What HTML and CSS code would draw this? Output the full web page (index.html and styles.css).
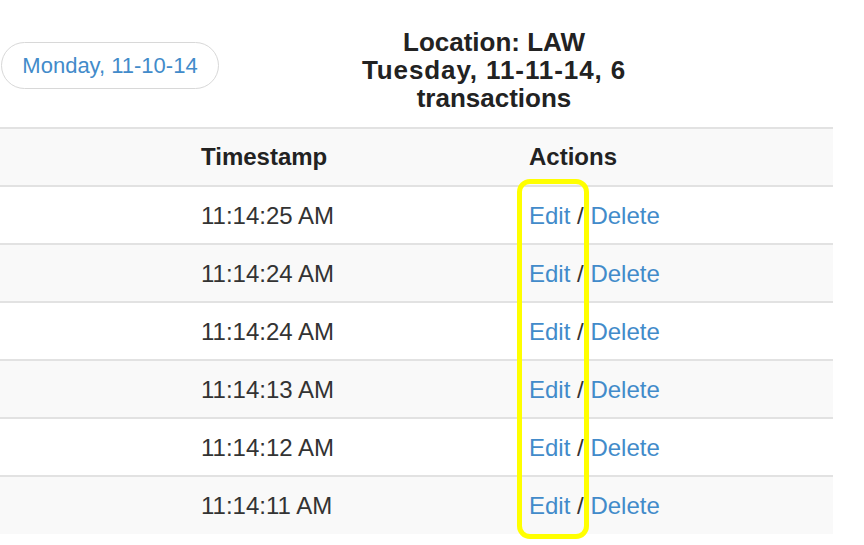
FILE: index.html
```html
<!DOCTYPE html>
<html>
<head>
<meta charset="utf-8">
<link rel="stylesheet" href="styles.css">
</head>
<body>
<div class="page">
  <div class="header">
    <a class="day-btn" href="#">Monday, 11-10-14</a>
    <h4 class="title">Location: LAW<br><span class="date">Tuesday, 11-11-14, 6</span> transactions</h4>
  </div>
  <div class="table">
    <div class="row head">
      <div class="cell"></div>
      <div class="cell">Timestamp</div>
      <div class="cell">Actions</div>
    </div>
    <div class="row">
      <div class="cell"></div>
      <div class="cell">11:14:25 AM</div>
      <div class="cell"><a href="#">Edit</a> / <a href="#">Delete</a></div>
    </div>
    <div class="row alt">
      <div class="cell"></div>
      <div class="cell">11:14:24 AM</div>
      <div class="cell"><a href="#">Edit</a> / <a href="#">Delete</a></div>
    </div>
    <div class="row">
      <div class="cell"></div>
      <div class="cell">11:14:24 AM</div>
      <div class="cell"><a href="#">Edit</a> / <a href="#">Delete</a></div>
    </div>
    <div class="row alt">
      <div class="cell"></div>
      <div class="cell">11:14:13 AM</div>
      <div class="cell"><a href="#">Edit</a> / <a href="#">Delete</a></div>
    </div>
    <div class="row">
      <div class="cell"></div>
      <div class="cell">11:14:12 AM</div>
      <div class="cell"><a href="#">Edit</a> / <a href="#">Delete</a></div>
    </div>
    <div class="row alt last">
      <div class="cell"></div>
      <div class="cell">11:14:11 AM</div>
      <div class="cell"><a href="#">Edit</a> / <a href="#">Delete</a></div>
    </div>
  </div>
  <div class="highlight"></div>
</div>
</body>
</html>
```
FILE: styles.css
```css
html, body {
  margin: 0;
  padding: 0;
  background: #fff;
}
body {
  font-family: "Liberation Sans", Arial, Helvetica, sans-serif;
  color: #333;
  overflow: hidden;
}
.page {
  position: relative;
  width: 864px;
  height: 545px;
}
.header {
  display: flex;
  align-items: flex-start;
  height: 127px;
}
.day-btn {
  display: block;
  box-sizing: border-box;
  margin: 42px 0 0 1px;
  height: 47px;
  width: 218px;
  border: 1px solid #d8d8d8;
  border-radius: 24px;
  color: #428bca;
  text-decoration: none;
  font-size: 22px;
  line-height: 45px;
  text-align: center;
}
.title {
  margin: 28px 0 0 135px;
  width: 280px;
  font-size: 26px;
  line-height: 28px;
  font-weight: bold;
  text-align: center;
  color: #222;
}
.title .date {
  letter-spacing: 0.9px;
}
.table {
  width: 833px;
  border-top: 2px solid #e2e2e2;
}
.row {
  display: grid;
  grid-template-columns: 193px 328px 1fr;
  height: 56px;
  border-bottom: 2px solid #e2e2e2;
  background: #fff;
}
.row.head, .row.alt {
  background: #f9f9f9;
}
.row.last {
  border-bottom: none;
  height: 57px;
}
.cell {
  padding: 0 8px;
  font-size: 24px;
  line-height: 58px;
  white-space: nowrap;
}
.row.head .cell {
  font-weight: bold;
  color: #222;
  line-height: 56px;
}
.cell a {
  color: #428bca;
  text-decoration: none;
}
.highlight {
  position: absolute;
  left: 517px;
  top: 179px;
  width: 72px;
  height: 360px;
  box-sizing: border-box;
  border: 5px solid #ffff00;
  border-radius: 13px;
}
```
